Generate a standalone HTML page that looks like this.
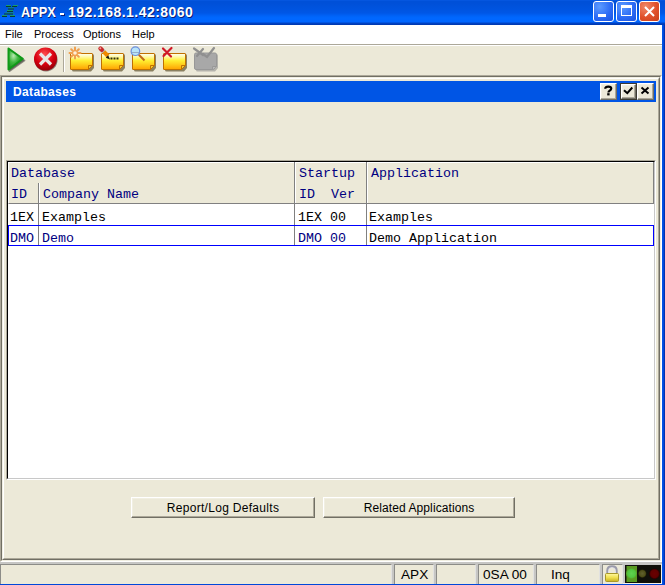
<!DOCTYPE html>
<html><head><meta charset="utf-8">
<style>
*{margin:0;padding:0;box-sizing:border-box}
html,body{width:665px;height:585px;overflow:hidden;background:#ECE9D8;font-family:"Liberation Sans",sans-serif}
.a{position:absolute}
#title{left:0;top:0;width:665px;height:25px;background:linear-gradient(to bottom,#0A5CE6 0px,#0050D8 1px,#0050D8 3px,#0053DE 8px,#0057E6 13px,#0063F8 16px,#0068FF 18px,#0066FF 22px,#0044C8 23px,#0036AC 25px)}
#ttext,#ttext3{top:4px;color:#fff;font-weight:bold;font-size:14px;white-space:nowrap;text-shadow:1px 1px 0 #0A1E7A}
#rframe{left:662px;top:25px;width:3px;height:560px;background:linear-gradient(to right,#0058EE,#0046D6 60%,#00229A)}
#bframe{left:0;top:584px;width:665px;height:1px;background:#0048DA}
#menu{left:0;top:25px;width:662px;height:19px;background:#fff}
#menu span{position:absolute;top:3px;font-size:11px;color:#000}
#menuline{left:0;top:44px;width:662px;height:1px;background:#ACA899}
#tb{left:0;top:45px;width:662px;height:30px;background:#ECE9D8;border-top:1px solid #fff}
.wbtn{width:21px;height:21px;border:1px solid #fff;border-radius:3px}

.mono{font-family:"Liberation Mono",monospace;font-size:13.33px;white-space:pre;position:absolute}
.hd{color:#000080}
.btn{position:absolute;background:#ECE9D8;border-top:1px solid #fff;border-left:1px solid #fff;border-right:1px solid #716F64;border-bottom:1px solid #716F64;box-shadow:inset -1px -1px 0 #ACA899, inset 1px 1px 0 #F1EFE2}
.btxt{position:absolute;font-size:12px;letter-spacing:0.3px;color:#000;white-space:nowrap}
.sp{position:absolute;top:564px;height:20px;background:#ECE9D8;border-top:1px solid #8C8C88;border-left:1px solid #8C8C88;border-right:1px solid #E2E2E0}
.st{position:absolute;font-size:13.6px;color:#000;white-space:nowrap}
</style></head><body>
<div id="title" class="a"></div>
<svg class="a" style="left:0;top:0" width="20" height="20" viewBox="0 0 20 20">
<g fill="#169A70">
<rect x="6" y="5" width="5" height="1"/><rect x="13" y="5" width="5" height="1"/>
<rect x="8" y="7.5" width="6" height="1"/>
<rect x="7" y="10" width="6" height="1"/>
<rect x="5" y="12.5" width="9" height="1"/>
<rect x="2" y="15" width="5" height="1"/><rect x="10" y="15" width="5" height="1"/>
</g>
<g fill="#0A3A30">
<rect x="6" y="6" width="5" height="1"/><rect x="12" y="6" width="5" height="1"/>
<rect x="8" y="8.5" width="6" height="1"/>
<rect x="7" y="11" width="6" height="1"/>
<rect x="4" y="13.5" width="9" height="1"/>
<rect x="2" y="16" width="5" height="1"/><rect x="10" y="16" width="5" height="1"/>
</g></svg>
<div id="ttext" class="a" style="left:21px;transform:scaleX(0.91);transform-origin:0 0">APPX</div><div class="a" style="left:60px;top:13px;width:4px;height:2px;background:#fff;box-shadow:1px 1px 0 #0A1E7A"></div><div id="ttext3" class="a" style="left:68px;letter-spacing:0.45px">192.168.1.42:8060</div>
<div class="a wbtn" style="left:593px;top:1px;background:radial-gradient(circle at 30% 25%,#5C9BFF,#2D6CF5 55%,#1A53E0)"></div>
<div class="a" style="left:598px;top:14px;width:8px;height:3px;background:#fff"></div>
<div class="a wbtn" style="left:616px;top:1px;background:radial-gradient(circle at 30% 25%,#5C9BFF,#2D6CF5 55%,#1A53E0)"></div>
<div class="a" style="left:621px;top:5px;width:11px;height:11px;border:1px solid #fff;border-top-width:3px"></div>
<div class="a wbtn" style="left:639px;top:1px;background:radial-gradient(circle at 30% 25%,#F08A6A,#E0502A 55%,#C8401A)"></div>
<svg class="a" style="left:639px;top:1px" width="21" height="21"><path d="M6 6L15 15M15 6L6 15" stroke="#fff" stroke-width="2"/></svg>
<div id="rframe" class="a"></div>
<div id="bframe" class="a"></div>
<div id="menu" class="a">
<span style="left:5px">File</span><span style="left:34px">Process</span><span style="left:83px">Options</span><span style="left:132px">Help</span>
</div>
<div id="menuline" class="a"></div>
<div id="tb" class="a"></div>

<!-- toolbar icons -->
<svg class="a" style="left:0;top:45px" width="230" height="30" viewBox="0 45 230 30">
<defs>
<radialGradient id="gplay" cx="0.35" cy="0.35" r="0.7"><stop offset="0" stop-color="#B8E8B0"/><stop offset="0.45" stop-color="#40B840"/><stop offset="1" stop-color="#0A8A12"/></radialGradient>
<radialGradient id="gred" cx="0.45" cy="0.3" r="0.75"><stop offset="0" stop-color="#FF5050"/><stop offset="0.55" stop-color="#D80010"/><stop offset="1" stop-color="#8A0008"/></radialGradient>
<linearGradient id="gnote" x1="0" y1="0" x2="0" y2="1"><stop offset="0" stop-color="#FFFFF4"/><stop offset="0.18" stop-color="#FFFAB0"/><stop offset="0.45" stop-color="#FFEE30"/><stop offset="1" stop-color="#FFA200"/></linearGradient>
</defs>
<path d="M9.5 50L24.3 60.5L9.5 71Z" fill="#2A2A24" opacity="0.7" stroke="#2A2A24" stroke-opacity="0.7" stroke-width="2" stroke-linejoin="round"/>
<path d="M8.5 48.5L22.8 58.8L8.5 69.5Z" fill="url(#gplay)" stroke="#109A18" stroke-width="2" stroke-linejoin="round"/>
<circle cx="46" cy="59.8" r="11.6" fill="#201010" opacity="0.5"/>
<circle cx="45.5" cy="59" r="11.5" fill="url(#gred)"/>
<path d="M40 53.5L51 64.5M51 53.5L40 64.5" stroke="#E8E8E8" stroke-width="3.2"/>
<rect x="63" y="50" width="1" height="22" fill="#ACA899"/>
<rect x="64" y="50" width="1" height="22" fill="#fff"/>
<g transform="translate(70,0)">
<path d="M2 55.5Q2 54 3.5 54H22.5Q24 54 24 55.5V68L21 71.5H3.5Q2 71.5 2 70Z" fill="#4A3A10" opacity="0.6"/>
<path d="M0.5 54Q0.5 53.5 1 53.5H22Q22.5 53.5 22.5 54V65.5L18.5 69.5H1Q0.5 69.5 0.5 69Z" fill="url(#gnote)" stroke="#C07000" stroke-width="1"/>
<path d="M18.5 69.5V65.5H22.5Z" fill="#F0C830" stroke="#C07000" stroke-width="1" stroke-linejoin="round"/>
</g>
<g stroke="#F0A050" stroke-width="2" stroke-linecap="round">
<path d="M75 47.5V58.5M69.5 53H80.5M71.2 49.2L78.8 56.8M78.8 49.2L71.2 56.8"/>
</g>
<circle cx="75" cy="53" r="1.8" fill="#FFF0D8"/>
<g transform="translate(101,0)">
<path d="M2 55.5Q2 54 3.5 54H22.5Q24 54 24 55.5V68L21 71.5H3.5Q2 71.5 2 70Z" fill="#4A3A10" opacity="0.6"/>
<path d="M0.5 54Q0.5 53.5 1 53.5H22Q22.5 53.5 22.5 54V65.5L18.5 69.5H1Q0.5 69.5 0.5 69Z" fill="url(#gnote)" stroke="#C07000" stroke-width="1"/>
<path d="M18.5 69.5V65.5H22.5Z" fill="#F0C830" stroke="#C07000" stroke-width="1" stroke-linejoin="round"/>
</g>
<path d="M103.5 51.5L108 56" stroke="#F08A00" stroke-width="4"/>
<path d="M105.8 57.8L110 59.5L108.2 55.2Z" fill="#1A1A10"/>
<path d="M101.8 49.8L103.8 51.8" stroke="#B0B0B0" stroke-width="4.2"/>
<path d="M100.5 48.5L101.8 49.8" stroke="#C82828" stroke-width="4.4" stroke-linecap="round"/>
<circle cx="100.3" cy="48.3" r="1" fill="#F0A0A0"/>
<rect x="110.5" y="57.5" width="2" height="2" fill="#303010"/><rect x="113.5" y="57.5" width="2" height="2" fill="#303010"/><rect x="116.5" y="57.5" width="2" height="2" fill="#303010"/>
<g transform="translate(132,0)">
<path d="M2 55.5Q2 54 3.5 54H22.5Q24 54 24 55.5V68L21 71.5H3.5Q2 71.5 2 70Z" fill="#4A3A10" opacity="0.6"/>
<path d="M0.5 54Q0.5 53.5 1 53.5H22Q22.5 53.5 22.5 54V65.5L18.5 69.5H1Q0.5 69.5 0.5 69Z" fill="url(#gnote)" stroke="#C07000" stroke-width="1"/>
<path d="M18.5 69.5V65.5H22.5Z" fill="#F0C830" stroke="#C07000" stroke-width="1" stroke-linejoin="round"/>
</g>
<path d="M138.8 54.8L144.5 60.5" stroke="#C06818" stroke-width="2"/>
<circle cx="135.4" cy="51.2" r="4.3" fill="#B8E4FA" stroke="#6C8EDC" stroke-width="1.2"/>
<path d="M131.8 52.5H139" stroke="#8CA0C0" stroke-width="0.8"/>
<g transform="translate(163,0)">
<path d="M2 55.5Q2 54 3.5 54H22.5Q24 54 24 55.5V68L21 71.5H3.5Q2 71.5 2 70Z" fill="#4A3A10" opacity="0.6"/>
<path d="M0.5 54Q0.5 53.5 1 53.5H22Q22.5 53.5 22.5 54V65.5L18.5 69.5H1Q0.5 69.5 0.5 69Z" fill="url(#gnote)" stroke="#C07000" stroke-width="1"/>
<path d="M18.5 69.5V65.5H22.5Z" fill="#F0C830" stroke="#C07000" stroke-width="1" stroke-linejoin="round"/>
</g>
<path d="M163 48.5L171 56.5M171.5 48L163.5 56" stroke="#D01828" stroke-width="2.2" stroke-linecap="round"/>
<g transform="translate(194,0)">
<path d="M2 55.5Q2 54 3.5 54H22.5Q24 54 24 55.5V68L21 71.5H3.5Q2 71.5 2 70Z" fill="#909090" opacity="0.6"/>
<path d="M0.5 54.5Q0.5 53 2 53H21Q22.5 53 22.5 54.5V66.5L19.5 69.5H2Q0.5 69.5 0.5 68Z" fill="#A8A8A8" stroke="#989898" stroke-width="1"/>
<path d="M18.5 69.5V66.5H22.5" fill="#B8B8B8" stroke="#989898" stroke-width="1"/>
<path d="M0 48.5L9 55M9 49L3 56" stroke="#909090" stroke-width="2.2" stroke-linecap="round"/>
<path d="M9 54L13 57L20 48" stroke="#909090" stroke-width="2.2" fill="none" stroke-linecap="round"/>
</g>
</svg>
<!-- panel frames -->
<div class="a" style="left:0;top:75px;width:662px;height:487px;border-top:1px solid #ACA899;border-left:1px solid #ACA899;border-right:1px solid #fff;border-bottom:1px solid #fff"></div>
<div class="a" style="left:1px;top:76px;width:660px;height:485px;border-top:1px solid #716F64;border-left:1px solid #716F64;border-right:1px solid #F1EFE2;border-bottom:1px solid #F1EFE2"></div>
<div class="a" style="left:2px;top:77px;width:658px;height:483px;border-top:1px solid #F1EFE2;border-left:1px solid #F1EFE2;border-right:1px solid #716F64;border-bottom:1px solid #716F64"></div>
<div class="a" style="left:3px;top:78px;width:656px;height:481px;border-top:1px solid #fff;border-left:1px solid #fff;border-right:1px solid #ACA899;border-bottom:1px solid #ACA899"></div>
<!-- panel title -->
<div class="a" style="left:6px;top:81px;width:650px;height:21px;background:#0055E5"></div>
<div class="a" style="left:13px;top:85px;color:#fff;font-weight:bold;font-size:12px;letter-spacing:0.35px">Databases</div>
<div class="btn" style="left:600px;top:83px;width:17px;height:17px"></div>
<svg class="a" style="left:600px;top:83px" width="17" height="17"><path d="M5.2 5.8Q5.2 3.6 8.3 3.6Q11.3 3.6 11.3 5.6Q11.3 6.9 9.6 7.7Q8.4 8.3 8.4 9.6" stroke="#000" stroke-width="2.1" fill="none"/><rect x="7.2" y="10.2" width="2.4" height="2.2" fill="#000"/></svg>
<div class="a" style="left:620px;top:83px;width:17px;height:17px;border:1px solid #3C3A30"></div>
<div class="btn" style="left:621px;top:84px;width:15px;height:15px"></div>
<svg class="a" style="left:620px;top:83px" width="17" height="17"><path d="M4 7.2L7.3 10.2L12.3 4.5" stroke="#000" stroke-width="2" fill="none"/></svg>
<div class="btn" style="left:637px;top:83px;width:17px;height:17px"></div>
<svg class="a" style="left:637px;top:83px" width="17" height="17"><path d="M4.5 4.5L11.5 10.5M11.5 4.5L4.5 10.5" stroke="#000" stroke-width="2" fill="none"/></svg>
<!-- table -->
<div class="a" style="left:6px;top:160px;width:650px;height:320px;border-top:1px solid #ACA899;border-left:1px solid #ACA899;border-right:1px solid #fff;border-bottom:1px solid #fff"></div>
<div class="a" style="left:7px;top:161px;width:648px;height:318px;background:#fff;border-top:1px solid #000;border-left:1px solid #000;border-right:1px solid #C8C8C8;border-bottom:1px solid #C8C8C8"></div>
<!-- header -->
<div class="a" style="left:8px;top:162px;width:646px;height:42px;background:#ECE9D8;border-top:1px solid #fff;border-left:1px solid #fff;border-bottom:1px solid #808080"></div>
<div class="a" style="left:294px;top:162px;width:1px;height:42px;background:#808080"></div>
<div class="a" style="left:295px;top:162px;width:1px;height:41px;background:#fff"></div>
<div class="a" style="left:366px;top:162px;width:1px;height:42px;background:#808080"></div>
<div class="a" style="left:367px;top:162px;width:1px;height:41px;background:#fff"></div>
<div class="a" style="left:653px;top:162px;width:1px;height:42px;background:#808080"></div>
<div class="a" style="left:38px;top:183px;width:1px;height:21px;background:#808080"></div>
<div class="a" style="left:39px;top:183px;width:1px;height:20px;background:#fff"></div>
<div class="mono hd" style="left:11px;top:166px">Database</div>
<div class="mono hd" style="left:11px;top:187px">ID</div>
<div class="mono hd" style="left:43px;top:187px">Company Name</div>
<div class="mono hd" style="left:299px;top:166px">Startup</div>
<div class="mono hd" style="left:299px;top:187px">ID  Ver</div>
<div class="mono hd" style="left:371px;top:166px">Application</div>
<!-- row separators -->
<div class="a" style="left:38px;top:204px;width:1px;height:42px;background:#808080"></div>
<div class="a" style="left:294px;top:204px;width:1px;height:42px;background:#808080"></div>
<div class="a" style="left:366px;top:204px;width:1px;height:42px;background:#808080"></div>
<!-- rows -->
<div class="mono" style="left:10px;top:210px;color:#000">1EX</div>
<div class="mono" style="left:42px;top:210px;color:#000">Examples</div>
<div class="mono" style="left:298px;top:210px;color:#000">1EX 00</div>
<div class="mono" style="left:369px;top:210px;color:#000">Examples</div>
<div class="a" style="left:8px;top:225px;width:646px;height:21px;border:1px solid #0000FF"></div>
<div class="mono" style="left:10px;top:231px;color:#000080">DMO</div>
<div class="mono" style="left:42px;top:231px;color:#000080">Demo</div>
<div class="mono" style="left:298px;top:231px;color:#000080">DMO 00</div>
<div class="mono" style="left:369px;top:231px;color:#000">Demo Application</div>
<!-- buttons -->
<div class="btn" style="left:131px;top:497px;width:184px;height:21px"></div>
<div class="btxt" style="left:131px;top:501px;width:184px;text-align:center">Report/Log Defaults</div>
<div class="btn" style="left:323px;top:497px;width:192px;height:21px"></div>
<div class="btxt" style="left:323px;top:501px;width:192px;text-align:center;letter-spacing:0.1px">Related Applications</div>
<!-- status bar -->
<div class="a" style="left:0;top:562px;width:662px;height:22px;background:#C6C6C4"></div>
<div class="sp" style="left:0;width:392px"></div>
<div class="sp" style="left:394px;width:40px"></div>
<div class="sp" style="left:436px;width:40px"></div>
<div class="sp" style="left:478px;width:56px"></div>
<div class="sp" style="left:536px;width:64px"></div>
<div class="sp" style="left:602px;width:21px"></div>
<div class="a" style="left:625px;top:565px;width:36px;height:18px;background:#10100A"></div><div class="a" style="left:623px;top:583px;width:39px;height:1px;background:#F4F2EA"></div><div class="a" style="left:661px;top:564px;width:1px;height:20px;background:#F4F2EA"></div>
<div class="st" style="left:401px;top:567px">APX</div>
<div class="st" style="left:483px;top:567px;letter-spacing:0px">0SA 00</div>
<div class="st" style="left:551px;top:567px">Inq</div>
<svg class="a" style="left:600px;top:562px" width="62" height="22" viewBox="600 562 62 22">
<defs>
<linearGradient id="glock" x1="0" y1="0" x2="0" y2="1"><stop offset="0" stop-color="#FFF8A0"/><stop offset="0.5" stop-color="#F0E050"/><stop offset="1" stop-color="#C8B020"/></linearGradient>
<radialGradient id="ggreen"><stop offset="0" stop-color="#60D050"/><stop offset="0.7" stop-color="#52C640"/><stop offset="1" stop-color="#5A9A22"/></radialGradient>
<radialGradient id="golive"><stop offset="0" stop-color="#606030"/><stop offset="0.7" stop-color="#505018"/><stop offset="1" stop-color="#1A1A06"/></radialGradient>
<radialGradient id="gredl"><stop offset="0" stop-color="#6A0000"/><stop offset="0.7" stop-color="#600000"/><stop offset="1" stop-color="#200000"/></radialGradient>
</defs>
<path d="M607.5 574V570.5Q607.5 566.5 612 566.5Q616.5 566.5 616.5 570.5V574" fill="none" stroke="#9A9AAA" stroke-width="2.4"/>
<path d="M608.5 573V570.5Q608.5 567.5 612 567.5Q615.5 567.5 615.5 570.5V573" fill="none" stroke="#E8E8F0" stroke-width="0.8"/>
<rect x="605.5" y="573.5" width="13" height="8" rx="1" fill="url(#glock)" stroke="#A89828" stroke-width="1"/>
<rect x="626.5" y="566" width="10.5" height="16" fill="#5A9A22"/>
<circle cx="631.5" cy="573.5" r="5.5" fill="url(#ggreen)"/>
<circle cx="642.3" cy="573.6" r="4.3" fill="url(#golive)"/>
<circle cx="654.5" cy="573.8" r="5.4" fill="url(#gredl)"/>
</svg>
</body></html>
